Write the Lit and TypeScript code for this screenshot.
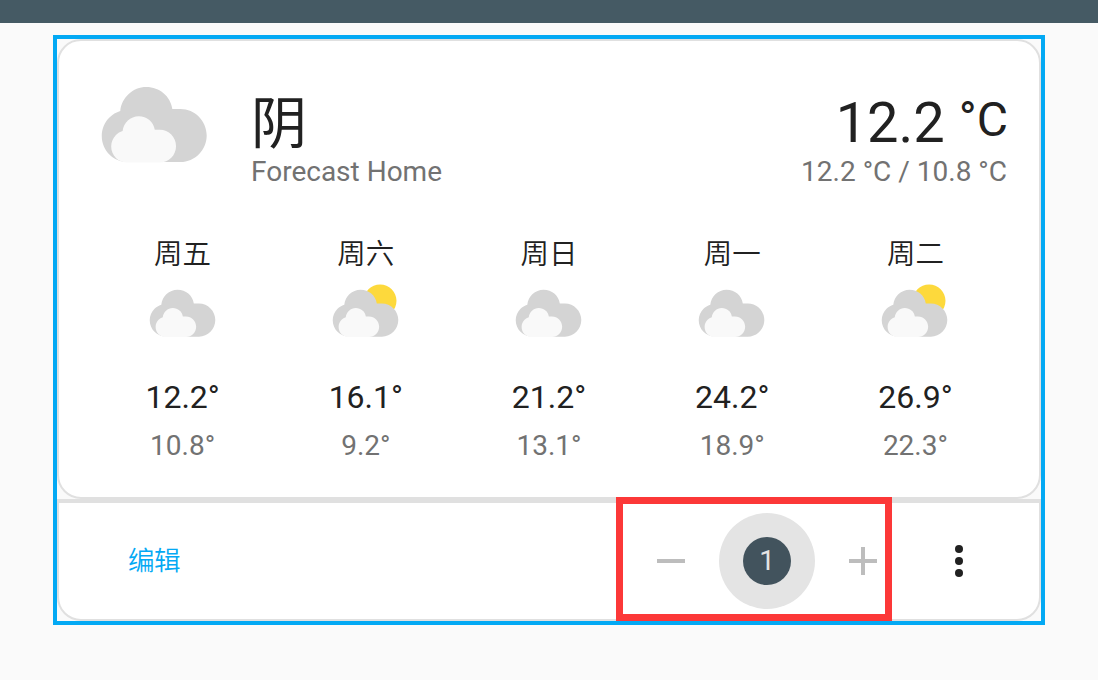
import { LitElement, html, svg, css, nothing } from "lit";
import { customElement, property } from "lit/decorators.js";

interface Day {
  name: string;
  sunny: boolean;
  high: string;
  low: string;
}

const DAYS: Day[] = [
  { name: "周五", sunny: false, high: "12.2°", low: "10.8°" },
  { name: "周六", sunny: true, high: "16.1°", low: "9.2°" },
  { name: "周日", sunny: false, high: "21.2°", low: "13.1°" },
  { name: "周一", sunny: false, high: "24.2°", low: "18.9°" },
  { name: "周二", sunny: true, high: "26.9°", low: "22.3°" },
];

@customElement("weather-icon")
export class WeatherIcon extends LitElement {
  @property({ type: Boolean }) sunny = false;

  static styles = css`
    :host { display: block; }
    .icon { display: block; width: 100%; height: 100%; }
    .sun { fill: #fdd93c; }
    .back { fill: #d4d4d4; }
    .front { fill: #f9f9f9; }
  `;

  render() {
    return html`<svg class="icon" viewBox="0 0 17 17">
      ${this.sunny
        ? svg`<path class="sun" d="m14.981 4.2112c0 1.9244-1.56 3.4844-3.484 3.4844-1.9244 0-3.4844-1.56-3.4844-3.4844s1.56-3.484 3.4844-3.484c1.924 0 3.484 1.5596 3.484 3.484"></path>`
        : nothing}
      <path class="back" d="m3.8863 5.035c-0.54892 0.16898-1.04 0.46637-1.4372 0.8636-0.63077 0.63041-1.0206 1.4933-1.0206 2.455 0 1.9251 1.5589 3.4682 3.4837 3.4682h6.9688c1.9251 0 3.484-1.5981 3.484-3.5232 0-1.9251-1.5589-3.5232-3.484-3.5232h-1.0834c-0.25294-1.6916-1.6986-2.9083-3.4463-2.9083-1.7995 0-3.2805 1.4153-3.465 3.1679"></path>
      <path class="front" d="m4.1996 7.6995c-0.33902 0.10407-0.64276 0.28787-0.88794 0.5334-0.39017 0.38982-0.63147 0.92322-0.63147 1.5176 0 1.1896 0.96414 2.1431 2.1537 2.1431h4.3071c1.1896 0 2.153-0.98742 2.153-2.1777 0-1.1896-0.96344-2.1777-2.153-2.1777h-0.66992c-0.15593-1.0449-1.0499-1.7974-2.1297-1.7974-1.112 0-2.0274 0.87524-2.1417 1.9586"></path>
    </svg>`;
  }
}

@customElement("app-root")
export class AppRoot extends LitElement {
  static styles = css`
    * { box-sizing: border-box; }
    :host {
      display: block;
      height: 680px;
      overflow: hidden;
      background: #fafafa;
      color: #212121;
      font-family: Roboto, "Noto Sans CJK SC", sans-serif;
    }
    .topbar { height: 23px; background: #455a64; }
    .frame {
      width: 992px;
      height: 590px;
      margin: 12px auto 0;
      border: 4px solid #03a9f4;
    }
    .card {
      height: 460px;
      padding: 32px;
      border: 2px solid #e0e0e0;
      border-radius: 24px;
      background: #fff;
    }
    .now { display: flex; height: 128px; }
    .big { width: 128px; height: 128px; margin-right: 32px; }
    .info { flex: 1; display: flex; justify-content: space-between; padding-top: 13px; }
    .state { height: 70px; font-size: 56px; line-height: 77px; white-space: nowrap; }
    .sub { font-size: 28px; line-height: 32px; color: #727272; white-space: nowrap; }
    .temps { text-align: right; }
    .value { display: flex; justify-content: flex-end; margin-right: -1px; }
    .number { line-height: 74px; }
    .unit { font-size: 48px; line-height: 68px; margin-left: 14px; }
    .days { display: flex; padding-top: 32px; }
    .day { flex: 1; display: flex; flex-direction: column; align-items: center; }
    .name { height: 40px; font-family: "Noto Sans CJK SC", sans-serif; font-size: 28.5px; line-height: 37px; font-weight: 350; }
    .small { width: 80px; height: 80px; margin: 8px 0 16px; }
    .high { height: 48px; font-size: 32px; line-height: 40px; }
    .low { height: 40px; font-size: 28px; line-height: 42px; color: #727272; }
    .actions {
      position: relative;
      display: flex;
      align-items: center;
      height: 122px;
      padding: 0 74px 0 69px;
      border: 2px solid #e0e0e0;
      border-top-width: 4px;
      border-radius: 0 0 24px 24px;
      background: #fff;
    }
    .edit { flex: 1; font-family: "Noto Sans CJK SC", sans-serif; font-size: 26.5px; line-height: 40px; letter-spacing: -0.5px; color: #03a9f4; font-weight: 350; padding-bottom: 4px; }
    .stepper { display: flex; align-items: center; margin-right: 42px; }
    .glyph { display: block; width: 96px; height: 96px; }
    .line { fill: #bdbdbd; }
    .dot { fill: #212121; }
    .halo {
      display: grid;
      place-items: center;
      width: 96px;
      height: 96px;
      border-radius: 50%;
      background: #e4e4e4;
    }
    .badge {
      width: 48px;
      height: 48px;
      border-radius: 50%;
      background: #42535d;
      color: #e4e4e4;
      font-size: 28px;
      line-height: 48px;
      text-align: center;
    }
    .more { display: block; width: 12px; height: 40px; }
    .highlight {
      position: absolute;
      left: 557px;
      top: -6px;
      width: 276px;
      height: 124px;
      border: 7px solid #fc3838;
    }
  `;

  render() {
    return html`
      <div class="topbar"></div>
      <div class="frame">
        <section class="card">
          <div class="now">
            <weather-icon class="big"></weather-icon>
            <div class="info">
              <div>
                <div class="state">阴</div>
                <div class="sub">Forecast Home</div>
              </div>
              <div class="temps">
                <div class="state value">
                  <span class="number">12.2</span><span class="unit">°C</span>
                </div>
                <div class="sub">12.2 °C / 10.8 °C</div>
              </div>
            </div>
          </div>
          <div class="days">
            ${DAYS.map(
              (d) => html`<div class="day">
                <div class="name">${d.name}</div>
                <weather-icon class="small" ?sunny=${d.sunny}></weather-icon>
                <div class="high">${d.high}</div>
                <div class="low">${d.low}</div>
              </div>`
            )}
          </div>
        </section>
        <section class="actions">
          <div class="edit">编辑</div>
          <div class="stepper">
            <svg class="glyph" viewBox="0 0 96 96"><rect class="line" x="34" y="46" width="28" height="4"></rect></svg>
            <div class="halo"><div class="badge">1</div></div>
            <svg class="glyph" viewBox="0 0 96 96"><path class="line" d="M46 34h4v12h12v4H50v12h-4V50H34v-4h12z"></path></svg>
          </div>
          <svg class="more" viewBox="0 0 12 40">
            <circle class="dot" cx="6" cy="8" r="4"></circle>
            <circle class="dot" cx="6" cy="20" r="4"></circle>
            <circle class="dot" cx="6" cy="32" r="4"></circle>
          </svg>
          <div class="highlight"></div>
        </section>
      </div>
    `;
  }
}
